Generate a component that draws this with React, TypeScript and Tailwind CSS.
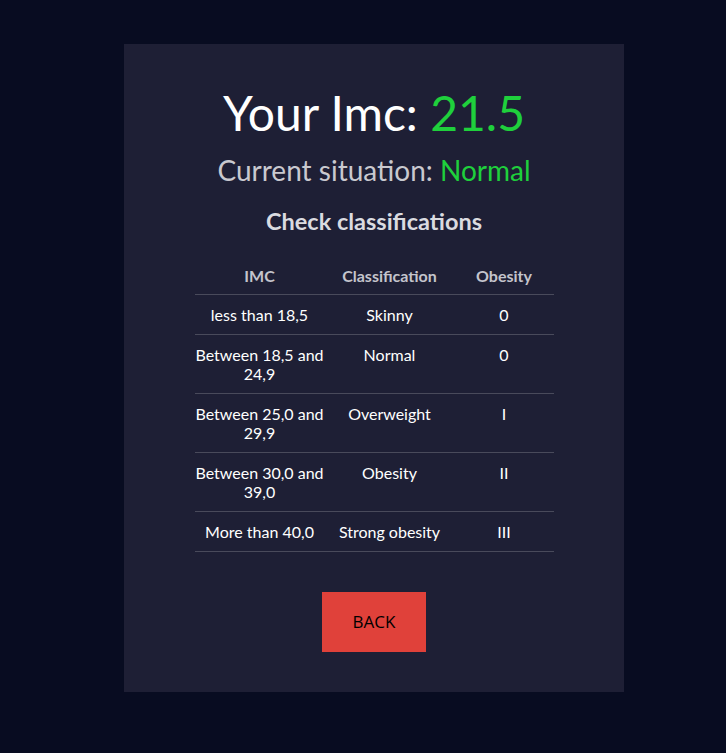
import React from "react";

const rows = [
  ["less than 18,5", "Skinny", "0"],
  ["Between 18,5 and 24,9", "Normal", "0"],
  ["Between 25,0 and 29,9", "Overweight", "I"],
  ["Between 30,0 and 39,0", "Obesity", "II"],
  ["More than 40,0", "Strong obesity", "III"],
];

export default function App() {
  return (
    <div className="min-h-[753px] w-full bg-[#080c21] pt-[44px] pl-[124px]" style={{ fontFamily: "Lato, 'Open Sans', sans-serif" }}>
      <div className="w-[500px] h-[648px] bg-[#1e1f35] flex flex-col items-center pt-[40px]">
        <h1 className="text-[48px] leading-[58px] text-white font-normal">
          Your Imc: <span className="text-[#1fd03c]">21.5</span>
        </h1>
        <h2 className="mt-[11px] text-[28px] leading-[34px] text-[#c9c9cf] font-normal">
          Current situation: <span className="text-[#1fd03c]">Normal</span>
        </h2>
        <h3 className="mt-[19px] text-[23.5px] leading-[30px] font-bold text-[#dadbe0]">Check classifications</h3>
        <table className="mt-[20px] w-[359px] text-[16px] leading-[19px] border-collapse">
          <thead>
            <tr className="border-b border-[#494a5b]">
              <th className="w-[130px] pt-[10px] pb-[9px] font-bold text-[#c4c4cc] text-center">IMC</th>
              <th className="w-[130px] pt-[10px] pb-[9px] font-bold text-[#c4c4cc] text-center">Classification</th>
              <th className="w-[99px] pt-[10px] pb-[9px] font-bold text-[#c4c4cc] text-center">Obesity</th>
            </tr>
          </thead>
          <tbody>
            {rows.map((r, i) => (
              <tr key={i} className="border-b border-[#494a5b] text-white">
                {r.map((c, j) => (
                  <td key={j} className="align-top text-center pt-[10px] pb-[10px]">{c}</td>
                ))}
              </tr>
            ))}
          </tbody>
        </table>
        <button className="mt-[40px] w-[104px] h-[60px] bg-[#e0413a] text-black text-[17px]" style={{ fontFamily: "'Open Sans', sans-serif" }}>
          BACK
        </button>
      </div>
    </div>
  );
}
